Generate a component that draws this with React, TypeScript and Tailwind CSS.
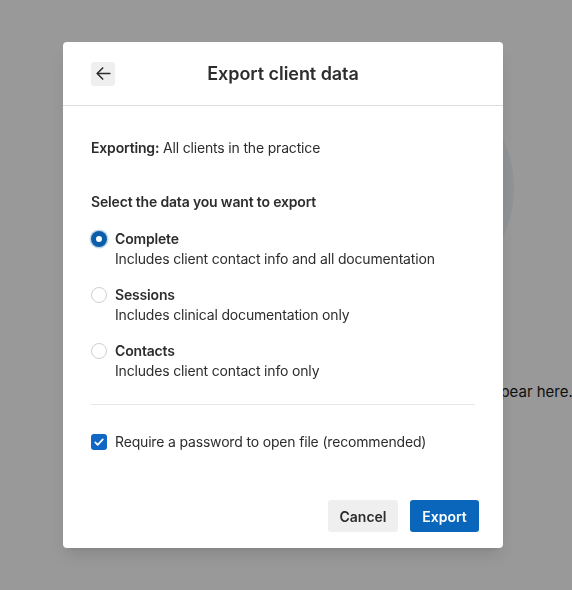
import { useState } from 'react';

const options = [
  { id: 'complete', label: 'Complete', desc: 'Includes client contact info and all documentation' },
  { id: 'sessions', label: 'Sessions', desc: 'Includes clinical documentation only' },
  { id: 'contacts', label: 'Contacts', desc: 'Includes client contact info only' },
];

export default function App() {
  const [selected, setSelected] = useState('complete');
  const [password, setPassword] = useState(true);

  return (
    <div
      className="relative h-[590px] w-[572px] overflow-hidden bg-white text-[#2d2d2d]"
      style={{ fontFamily: 'Inter, "Noto Sans", sans-serif' }}
    >
      {/* page behind the dialog */}
      <div className="flex flex-col items-center pl-[226px] pt-[73px]">
        <div className="h-[230px] w-[230px] rounded-full bg-[#eef5fa]" />
        <p className="mt-[78px] whitespace-nowrap text-[15px] text-[#1a1a1a]">
          Exported client files and reports will appear here.
        </p>
      </div>

      {/* overlay */}
      <div className="fixed inset-0 bg-black/40" />

      {/* dialog */}
      <div className="absolute left-[63px] top-[42px] w-[440px] rounded-[4px] bg-white shadow-lg">
        <div className="relative flex h-[64px] items-center justify-center border-b border-[#dcdcdc]">
          <button className="absolute left-[28px] flex h-6 w-6 items-center justify-center rounded-[3px] bg-[#efefef] text-[#2d2d2d]">
            <svg width="19" height="19" viewBox="0 0 24 24" fill="none" stroke="currentColor" strokeWidth="2" strokeLinecap="round" strokeLinejoin="round">
              <path d="M20 12H4.5" />
              <path d="M11 5l-7 7 7 7" />
            </svg>
          </button>
          <h2 className="text-[18px] font-semibold tracking-[-0.05px] text-[#2d2d2d]">Export client data</h2>
        </div>

        <div className="px-[28px] pt-[32px] text-[14px] leading-5 tracking-[-0.17px]">
          <p>
            <span className="font-semibold">Exporting:</span> All clients in the practice
          </p>

          <p className="mt-[34px] font-semibold">Select the data you want to export</p>

          <div className="mt-[17px] flex flex-col gap-4">
            {options.map((o) => {
              const on = selected === o.id;
              return (
                <label key={o.id} className="flex cursor-pointer gap-2" onClick={() => setSelected(o.id)}>
                  <span className="flex h-5 items-center">
                    {on ? (
                      <span className="flex h-4 w-4 items-center justify-center rounded-full bg-[#0b5ea9] shadow-[0_0_0_1.5px_rgba(11,94,169,0.25)]">
                        <span className="h-[6px] w-[6px] rounded-full bg-white" />
                      </span>
                    ) : (
                      <span className="h-4 w-4 rounded-full border border-[#cfcfcf] bg-white" />
                    )}
                  </span>
                  <span className="flex flex-col">
                    <span className="font-semibold">{o.label}</span>
                    <span>{o.desc}</span>
                  </span>
                </label>
              );
            })}
          </div>

          <div className="mt-[23px] h-px bg-[#e6e6e6]" />

          <label className="mt-[26px] flex cursor-pointer items-center gap-2 pt-px" onClick={() => setPassword(!password)}>
            <span
              className={
                password
                  ? 'flex h-4 w-4 items-center justify-center rounded-[3px] bg-[#1266c4]'
                  : 'h-4 w-4 rounded-[3px] border border-[#cfcfcf] bg-white'
              }
            >
              {password && (
                <svg width="12" height="12" viewBox="0 0 12 12" fill="none" stroke="white" strokeWidth="1.7" strokeLinecap="round" strokeLinejoin="round">
                  <path d="M2.3 6.4l2.4 2.4L9.8 3.4" />
                </svg>
              )}
            </span>
            <span>Require a password to open file (recommended)</span>
          </label>
        </div>

        <div className="flex justify-end gap-3 px-6 pb-4 pt-[48px]">
          <button className="h-8 w-[70px] rounded-[3px] bg-[#efefef] text-[14px] font-semibold text-[#2d2d2d]">Cancel</button>
          <button className="h-8 w-[69px] rounded-[3px] bg-[#0a66bb] text-[14px] font-semibold text-white">Export</button>
        </div>
      </div>
    </div>
  );
}
